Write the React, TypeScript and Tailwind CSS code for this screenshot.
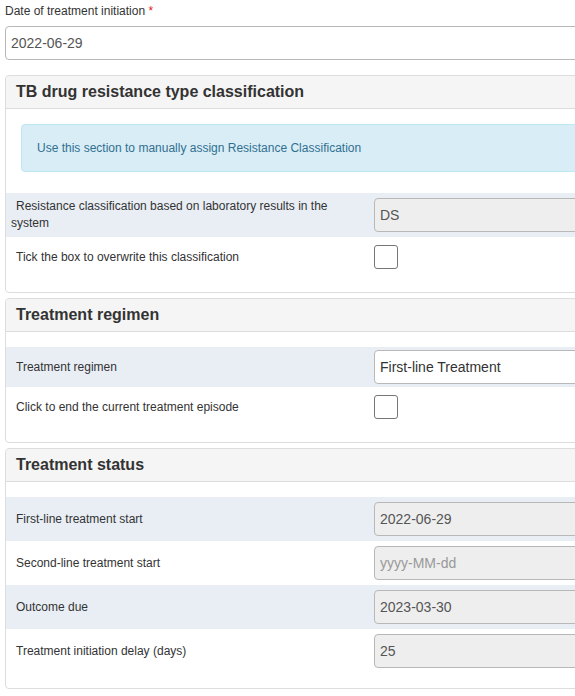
import React from 'react'

const FONT = "font-['Liberation_Sans',Arial,sans-serif]"

function Panel({ title, children }: { title: string; children: React.ReactNode }) {
  return (
    <div className="w-[620px] mb-[5px] border border-[#dddddd] rounded-[4px] bg-white">
      <div className="h-[33px] flex items-center px-[10px] bg-[#f5f5f5] border-b border-[#dddddd] rounded-t-[4px]">
        <h3 className="text-[16px] font-bold text-[#333333] leading-none">{title}</h3>
      </div>
      <div className="pt-[15px] pb-[15px]">{children}</div>
    </div>
  )
}

function Row({
  label,
  shaded,
  pad = 'py-[5px]',
  children,
}: {
  label: string
  shaded?: boolean
  pad?: string
  children: React.ReactNode
}) {
  return (
    <div className={`flex items-center ${pad} ${shaded ? 'bg-[#e9eef5]' : 'bg-white'}`}>
      <div className="w-[368px] shrink-0 pl-[5px] pr-[26px] indent-[5px] text-[12px] leading-[17px] text-[#333333]">
        {label}
      </div>
      <div className="flex-1 pr-[10px]">{children}</div>
    </div>
  )
}

function ReadOnlyBox({ value, placeholder }: { value?: string; placeholder?: string }) {
  return (
    <input
      readOnly
      value={value ?? ''}
      placeholder={placeholder}
      className="w-full h-[34px] px-[5px] border border-[#b8b8b8] rounded-[4px] bg-[#eeeeee] text-[14px] text-[#555555] placeholder:text-[#999999] outline-none"
    />
  )
}

function Checkbox() {
  return <div className="w-[24px] h-[24px] border border-[#767676] rounded-[3px] bg-white" />
}

export default function App() {
  return (
    <div className={`w-[575px] h-[696px] overflow-hidden bg-white ${FONT}`}>
      <div className="w-[640px] pl-[5px] pt-[3px]">
        <label className="block text-[12px] leading-[17px] text-[#333333] mb-[6px]">
          Date of treatment initiation <span className="text-[#e02020]">*</span>
        </label>
        <input
          readOnly
          value="2022-06-29"
          className="block w-[620px] h-[34px] px-[5px] mb-[15px] border border-[#b8b8b8] rounded-[4px] bg-white text-[14px] text-[#555555] outline-none"
        />

        {/* Resistance classification */}
        <Panel title="TB drug resistance type classification">
          <div className="mx-[15px] mb-[21px] h-[48px] flex items-center px-[15px] bg-[#d9edf7] border border-[#bce8f1] rounded-[4px] text-[12px] text-[#31708f]">
            Use this section to manually assign Resistance Classification
          </div>
          <Row label="Resistance classification based on laboratory results in the system" shaded>
            <ReadOnlyBox value="DS" />
          </Row>
          <Row label="Tick the box to overwrite this classification" pad="py-[8px]">
            <Checkbox />
          </Row>
        </Panel>

        {/* Regimen */}
        <Panel title="Treatment regimen">
          <Row label="Treatment regimen" shaded pad="py-[3px]">
            <div className="w-full h-[34px] flex items-center px-[5px] border border-[#b8b8b8] rounded-[4px] bg-white text-[14px] text-[#333333]">
              First-line Treatment
            </div>
          </Row>
          <Row label="Click to end the current treatment episode" pad="py-[8px]">
            <Checkbox />
          </Row>
        </Panel>

        {/* Status */}
        <Panel title="Treatment status">
          <Row label="First-line treatment start" shaded>
            <ReadOnlyBox value="2022-06-29" />
          </Row>
          <Row label="Second-line treatment start">
            <ReadOnlyBox placeholder="yyyy-MM-dd" />
          </Row>
          <Row label="Outcome due" shaded>
            <ReadOnlyBox value="2023-03-30" />
          </Row>
          <Row label="Treatment initiation delay (days)">
            <ReadOnlyBox value="25" />
          </Row>
        </Panel>
      </div>
    </div>
  )
}
